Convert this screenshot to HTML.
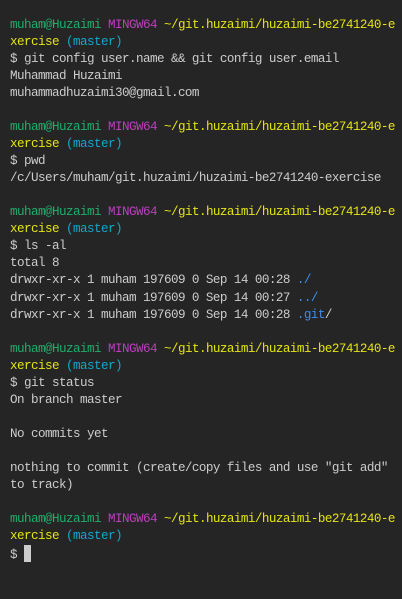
<!DOCTYPE html>
<html><head><meta charset="utf-8"><style>
html,body{margin:0;padding:0;background:#252526;width:402px;height:599px;overflow:hidden}
pre{margin:0;position:absolute;left:10px;top:16.5px;font-family:"Liberation Mono",monospace;font-size:12.6px;letter-spacing:-0.56px;line-height:17.07px;color:#cccccc;white-space:pre}
.g{color:#1fae6a}.m{color:#bc3fbc}.y{color:#e5e510}.c{color:#11a8cd}.b{color:#3b8eea}
.cur{display:inline-block;width:7px;height:17px;background:#cccccc;vertical-align:-4px}
</style></head><body><pre><span class="g">muham@Huzaimi</span> <span class="m">MINGW64</span> <span class="y">~/git.huzaimi/huzaimi-be2741240-e
xercise</span> <span class="c">(master)</span>
$ git config user.name &amp;&amp; git config user.email
Muhammad Huzaimi
muhammadhuzaimi30@gmail.com

<span class="g">muham@Huzaimi</span> <span class="m">MINGW64</span> <span class="y">~/git.huzaimi/huzaimi-be2741240-e
xercise</span> <span class="c">(master)</span>
$ pwd
/c/Users/muham/git.huzaimi/huzaimi-be2741240-exercise

<span class="g">muham@Huzaimi</span> <span class="m">MINGW64</span> <span class="y">~/git.huzaimi/huzaimi-be2741240-e
xercise</span> <span class="c">(master)</span>
$ ls -al
total 8
drwxr-xr-x 1 muham 197609 0 Sep 14 00:28 <span class="b">./</span>
drwxr-xr-x 1 muham 197609 0 Sep 14 00:27 <span class="b">../</span>
drwxr-xr-x 1 muham 197609 0 Sep 14 00:28 <span class="b">.git</span>/

<span class="g">muham@Huzaimi</span> <span class="m">MINGW64</span> <span class="y">~/git.huzaimi/huzaimi-be2741240-e
xercise</span> <span class="c">(master)</span>
$ git status
On branch master

No commits yet

nothing to commit (create/copy files and use "git add"
to track)

<span class="g">muham@Huzaimi</span> <span class="m">MINGW64</span> <span class="y">~/git.huzaimi/huzaimi-be2741240-e
xercise</span> <span class="c">(master)</span>
$ <span class="cur"></span></pre></body></html>
